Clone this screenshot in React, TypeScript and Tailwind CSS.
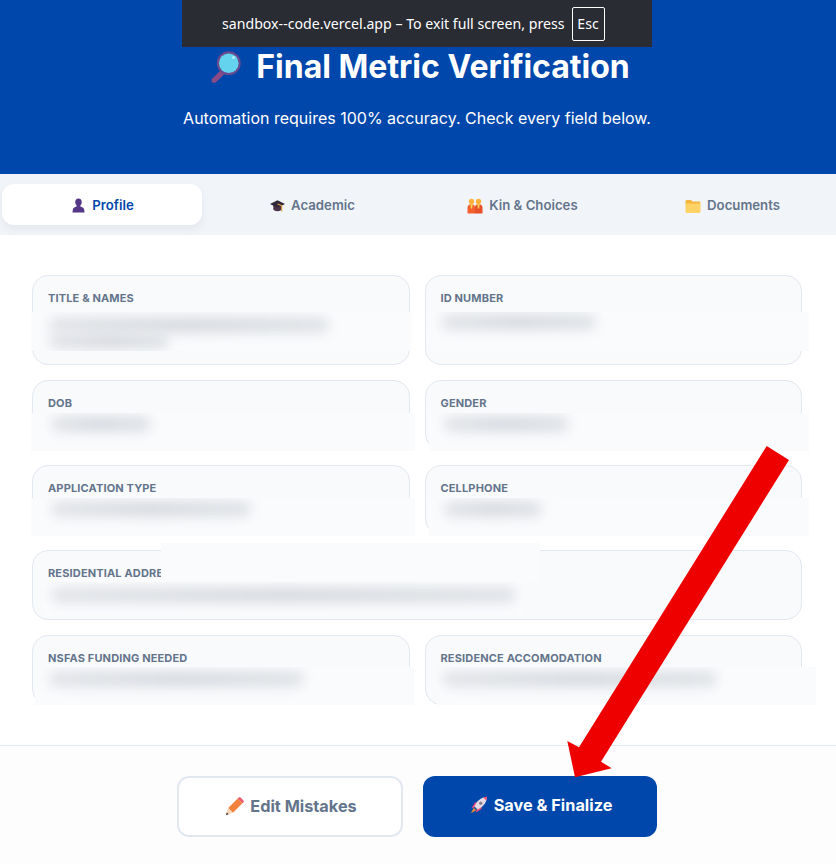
import type { ReactNode } from 'react';

const inter = 'font-["Inter",sans-serif]';

function MagnifierEmoji() {
  return (
    <svg viewBox="0 0 36 36" className="size-[34px]" aria-hidden>
      <path d="M14 21l4 4-9.500 9.200c-1.200 1.100-3 1.100-4.100 0-1-1.100-1-2.900.1-4z" fill="#8a4a87" />
      <circle cx="22" cy="14" r="12.600" fill="#6a4a8e" />
      <circle cx="22" cy="14" r="10.400" fill="#63d3ee" />
      <circle cx="27" cy="8" r="1.500" fill="#c6f0fa" />
    </svg>
  );
}

function BustEmoji() {
  return (
    <svg viewBox="0 0 16 16" className="size-[15px]" aria-hidden>
      <path d="M8 .5c2.300 0 3.500 1.700 3.500 3.800 0 1.500-.7 2.900-1.500 3.600v1.100c1.900.6 3.600 1.300 3.900 2.800l.6 3.700H1.500l.6-3.700c.3-1.500 2-2.200 3.900-2.800V7.900C5.200 7.200 4.500 5.800 4.500 4.300 4.500 2.200 5.700.5 8 .5z" fill="#553788" />
    </svg>
  );
}

function CapEmoji() {
  return (
    <svg viewBox="0 0 16 16" className="size-[15px]" aria-hidden>
      <path d="M3.500 7.500v4.500c0 1 2 2 4.500 2s4.500-1 4.500-2V7.500z" fill="#4a3348" />
      <path d="M0 6.500L8 2.500l8 4-8 4z" fill="#31273a" />
      <path d="M8 6.500l4.500 1.700v6.300" stroke="#e2a042" strokeWidth="1.200" fill="none" />
    </svg>
  );
}

function PeopleEmoji() {
  return (
    <svg viewBox="0 0 16 16" className="size-[16px]" aria-hidden>
      <circle cx="4.500" cy="3.500" r="2.700" fill="#ffb13b" />
      <circle cx="11.500" cy="3.500" r="2.700" fill="#ffb13b" />
      <path d="M.5 15.500V9.500C.5 7.500 2.500 6 4.500 6S8 7.500 8 9.500v6z" fill="#f4602e" />
      <path d="M8 15.500v-6C8 7.500 9.500 6 11.500 6s4 1.500 4 3.500v6z" fill="#e8502a" />
      <path d="M3.200 6h2.600l-.6 4.500H3.800zM10.200 6h2.600l-.6 4.500h-1.400z" fill="#ffcb4c" />
    </svg>
  );
}

function FolderEmoji() {
  return (
    <svg viewBox="0 0 16 16" className="size-[16px]" aria-hidden>
      <path d="M.5 3.500C.5 2.700 1.200 2 2 2h4l1.500 1.500h6.500c.8 0 1.500.7 1.500 1.500v1H.5z" fill="#f5b53f" />
      <path d="M.5 5.500h15v8c0 .8-.7 1.500-1.500 1.500H2c-.8 0-1.500-.7-1.500-1.500z" fill="#ffd266" />
    </svg>
  );
}

function PencilEmoji() {
  return (
    <svg viewBox="0 0 18 18" className="size-[19px]" aria-hidden>
      <path d="M3 10.500l9-9 4.500 4.500-9 9z" fill="#f4823f" />
      <path d="M12 1.500l1-1c.5-.5 1.200-.5 1.700 0l2.800 2.800c.5.5.5 1.200 0 1.700l-1 1z" fill="#ea596e" />
      <path d="M3 10.500L7.500 15 .8 17.200z" fill="#f7d7b5" />
      <path d="M1.700 14.500l1.800 1.800-2.700.9z" fill="#553b45" />
    </svg>
  );
}

function RocketEmoji() {
  return (
    <svg viewBox="0 0 18 18" className="size-[18px]" aria-hidden>
      <path d="M4.500 11.500l-3 .5L5 6.500l3-.5zM6.500 13.500l-.5 3L11.500 13l.5-3z" fill="#ea4c78" />
      <path d="M4.500 10.500C6.500 5.500 10.500 1.500 17 .8 16.500 7.500 12.500 11.500 7.500 13.500z" fill="#e4dbe4" />
      <path d="M13.200 1.500c1.100-.4 2.500-.6 3.800-.7-.1 1.300-.3 2.600-.7 3.800z" fill="#ea4c78" />
      <circle cx="10.700" cy="7.300" r="1.700" fill="#8d7f92" />
      <path d="M3.800 11.800l2.400 2.400L.8 17.200z" fill="#e98b2e" />
    </svg>
  );
}

function Tab({ icon, label, active }: { icon: ReactNode; label: string; active?: boolean }) {
  return (
    <div
      className={
        active
          ? 'flex h-[41px] items-center justify-center gap-[6px] rounded-xl bg-white pt-[2px] pl-[1px] text-[13.2px] font-semibold text-[#0047ab] shadow-[0_4px_10px_rgba(15,23,42,0.06)]'
          : 'flex h-[41px] items-center justify-center gap-[6px] rounded-xl pt-[2px] pl-[1px] text-[13.2px] font-semibold text-[#64748b]'
      }
    >
      {icon}
      {label}
    </div>
  );
}

function Smudge({ className }: { className: string }) {
  return (
    <div
      className={`absolute -mt-[1px] h-[16px] rounded-full bg-linear-to-r from-[#e2e4e8] via-[#d8dbe0] to-[#e0e3e7] blur-[6px] ${className}`}
    />
  );
}

// screenshot redaction pasted over the page, coordinates are relative to the card
function Patch({ className, children }: { className: string; children?: ReactNode }) {
  return <div className={`absolute z-10 overflow-hidden bg-[#fafbfd] ${className}`}>{children}</div>;
}

function Field({
  label,
  className,
  lines = 1,
  children,
}: {
  label: string;
  className?: string;
  lines?: number;
  children?: ReactNode;
}) {
  return (
    <div className={`relative rounded-2xl border border-[#e2e8f0] bg-[#f8fafc] px-[15px] pt-[14px] pb-[16px] ${className ?? ''}`}>
      <div className="mb-[2px] text-[11px] leading-[16px] font-bold tracking-[0.15px] text-[#64748b] uppercase">{label}</div>
      <div className={lines === 2 ? 'h-[40px]' : 'h-[20px]'} />
      {children}
    </div>
  );
}

export default function App() {
  return (
    <div className={`relative flex min-h-[864px] flex-col overflow-hidden bg-white ${inter}`}>
      <header className="flex h-[174px] flex-col items-center bg-[#0047ab] pt-[46px] text-white">
        <h1 className="flex h-[42px] items-center gap-[14px] pl-[2px] text-[32px] font-bold">
          <MagnifierEmoji />
          Final Metric Verification
        </h1>
        <p className="mt-[18px] pr-[2px] text-base leading-[24px]">Automation requires 100% accuracy. Check every field below.</p>
      </header>

      <nav className="grid h-[61px] grid-cols-[200px_200px_200px_200px] items-center gap-[10px] bg-[#f1f5f9] pl-[2px]">
        <Tab active icon={<BustEmoji />} label="Profile" />
        <Tab icon={<CapEmoji />} label="Academic" />
        <Tab icon={<PeopleEmoji />} label="Kin & Choices" />
        <Tab icon={<FolderEmoji />} label="Documents" />
      </nav>

      <main className="grid grid-cols-2 gap-[15px] pt-[40px] pr-[34px] pb-[40px] pl-[32px]">
        <Field label="Title & Names" lines={2}>
          <Patch className="top-[36px] -left-[2px] h-[39px] w-[380px]">
            <Smudge className="top-[6px] left-[18px] w-[280px]" />
            <Smudge className="top-[22px] left-[18px] w-[120px]" />
          </Patch>
        </Field>
        <Field label="ID Number" lines={2}>
          <Patch className="top-[36px] left-[5px] h-[39px] w-[378px]">
            <Smudge className="top-[3px] left-[10px] w-[155px]" />
          </Patch>
        </Field>
        <Field label="DOB">
          <Patch className="top-[32px] -left-[2px] h-[38px] w-[384px]">
            <Smudge className="top-[4px] left-[20px] w-[100px]" />
          </Patch>
        </Field>
        <Field label="Gender">
          <Patch className="top-[32px] left-[3px] h-[38px] w-[380px]">
            <Smudge className="top-[4px] left-[15px] w-[125px]" />
          </Patch>
        </Field>
        <Field label="Application Type">
          <Patch className="top-[32px] -left-[2px] h-[38px] w-[384px]">
            <Smudge className="top-[4px] left-[20px] w-[200px]" />
          </Patch>
        </Field>
        <Field label="Cellphone">
          <Patch className="top-[32px] left-[3px] h-[38px] w-[380px]">
            <Smudge className="top-[4px] left-[15px] w-[98px]" />
          </Patch>
        </Field>
        <Field label="Residential Address" className="col-span-2">
          <Patch className="-top-[8px] left-[128px] h-[39px] w-[379px]" />
          <Patch className="top-[31px] left-[10px] h-[33px] w-[480px]">
            <Smudge className="top-[6px] left-[8px] w-[465px]" />
          </Patch>
        </Field>
        <Field label="NSFAS Funding Needed">
          <Patch className="top-[31px] left-[2px] h-[38px] w-[379px]">
            <Smudge className="top-[5px] left-[14px] w-[255px]" />
          </Patch>
        </Field>
        <Field label="Residence Accomodation">
          <Patch className="top-[31px] left-[11px] h-[38px] w-[379px]">
            <Smudge className="top-[5px] left-[5px] w-[275px]" />
          </Patch>
        </Field>
      </main>

      <footer className="flex flex-1 justify-center gap-[20px] border-t border-[#e2e8f0] bg-[#fdfdfe] pt-[30px] pr-[2px]">
        <button className="flex h-[61px] w-[226px] items-center justify-center gap-[6px] rounded-xl border-2 border-[#e2e8f0] bg-white pl-[2px] text-[16.3px] font-bold text-[#64748b]">
          <PencilEmoji />
          Edit Mistakes
        </button>
        <button className="flex h-[61px] w-[234px] items-center justify-center gap-[6px] rounded-xl bg-[#0047ab] pb-[3px] pl-[2px] text-[16.3px] font-bold text-white">
          <RocketEmoji />
          Save &amp; Finalize
        </button>
      </footer>

      {/* browser full screen notice */}
      <div className='absolute top-0 left-[182px] z-20 flex h-[47px] w-[470px] items-center bg-[#292c33] pl-[40px] font-["Noto_Sans",sans-serif] text-[14.15px] text-white'>
        sandbox--code.vercel.app – To exit full screen, press
        <span className="ml-[7px] flex h-[34px] w-[33px] items-center justify-center rounded-[2px] border border-white">Esc</span>
      </div>

      {/* annotation arrow */}
      <svg className="absolute inset-0 z-30 h-[864px] w-[836px]" viewBox="0 0 836 864" aria-hidden>
        <polygon points="766.700,446 789,460 601,761.700 611.700,768.300 575,777.300 567.300,741 579,747.300" fill="#ee0000" />
      </svg>
    </div>
  );
}
